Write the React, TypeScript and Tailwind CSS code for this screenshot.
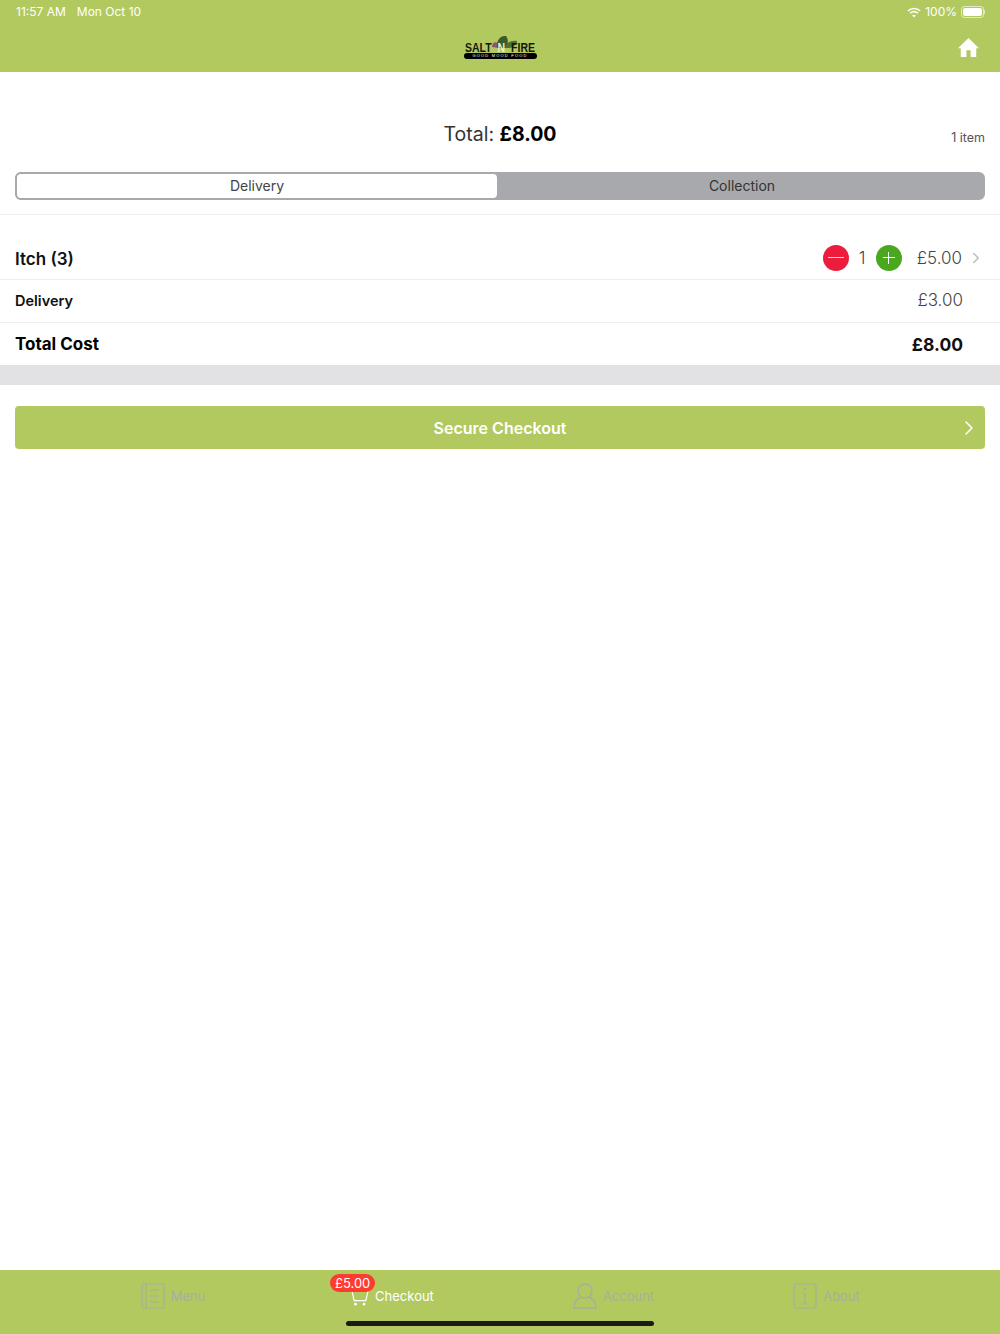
import React from "react";
import { ChevronRight } from "lucide-react";

const mont = "font-['Inter','Liberation_Sans',sans-serif]";

const Logo = () => (
  <div className="relative flex h-[24px] w-[74px] flex-col items-center">
    <svg viewBox="0 0 26 14" className="absolute left-[29px] top-0 h-[14px] w-[26px]">
      <path d="M0 12 C0 8 3 6 6 8 L7 13 Z" fill="#8a5a6a" />
      <path d="M5 13 C4 6 8 0 14 1 C17 5 16 10 13 13 Z" fill="#3c5a2a" />
      <path d="M12 13 C14 8 19 5 25 6 C25 10 21 13 17 13 Z" fill="#4d6e35" />
    </svg>
    <div className="relative mt-[6px] flex h-[12px] w-[70px] scale-y-[1.25] items-center justify-between text-[10.5px] leading-none font-black text-[#141810] font-['Liberation_Sans',sans-serif]">
      <span>SALT</span>
      <span className="text-[#e8efd4]">N</span>
      <span>FIRE</span>
    </div>
    <div className="relative flex h-[6px] w-[73px] items-center justify-center rounded-[3px] bg-black text-[4px] leading-none tracking-[1.2px] text-white font-['Liberation_Sans',sans-serif]">
      GOOD MOOD FOOD
    </div>
  </div>
);

const Header = () => (
  <header className="flex h-[72px] flex-col bg-[#b2c95f] text-white">
    <div className="flex h-[24px] items-center justify-between pl-[16px] pr-[15px] text-[12px] font-['Inter',sans-serif]">
      <div className="flex gap-[11px]">
        <span>11:57 AM</span>
        <span>Mon Oct 10</span>
      </div>
      <div className="flex items-center gap-[4px]">
        <svg viewBox="0 0 16 12" className="h-[11px] w-[14px]" fill="none" stroke="white" strokeWidth="1.8">
          <path d="M1 4.2 C5 0.6 11 0.6 15 4.2" />
          <path d="M3.6 6.8 C6.2 4.6 9.8 4.6 12.4 6.8" />
          <path d="M8 11.6 L5.8 9.2 C7 8.2 9 8.2 10.2 9.2 Z" fill="white" stroke="none" />
        </svg>
        <span>100%</span>
        <div className="flex items-center">
          <div className="h-[12px] w-[23px] rounded-[3px] border border-white/60 p-[1px]">
            <div className="h-full w-full rounded-[2px] bg-white" />
          </div>
          <div className="h-[4px] w-[1px] bg-white/60" />
        </div>
      </div>
    </div>
    <div className="relative flex flex-1 items-start justify-center pt-[11px]">
      <Logo />
      <svg viewBox="0 0 20 18" className="absolute right-[21px] top-[14px] h-[19px] w-[21px]" fill="white">
        <path d="M10 0 L20 9.6 L17.4 9.6 L17.4 18 L12 18 L12 11.6 L8 11.6 L8 18 L2.6 18 L2.6 9.6 L0 9.6 Z" />
      </svg>
    </div>
  </header>
);

const TabBar = () => (
  <footer className="relative mt-auto grid h-[64px] grid-cols-4 bg-[#b2c95f] pl-[65px] pr-[67px] text-[13px] font-['Inter',sans-serif]">
    <div className="flex items-start justify-center gap-[6px] pr-[1px] pt-[13px] text-[#a6afa0]">
      <svg viewBox="0 0 24 26" className="h-[26px] w-[24px]" fill="none" stroke="#a6afa0" strokeWidth="1.2">
        <rect x="1" y="1" width="22" height="24" rx="1.5" />
        <path d="M5 1V25M9 7H18M9 13H18M9 19H18" />
      </svg>
      <span className="mt-[4px]">Menu</span>
    </div>
    <div className="relative flex items-start justify-center gap-[6px] pl-[4px] pt-[17px] text-white">
      <svg viewBox="0 0 20 20" className="h-[20px] w-[18px]" fill="none" stroke="white" strokeWidth="1.3">
        <path d="M1 3H19L16.5 14H3.5Z" />
        <circle cx="5" cy="18" r="0.9" fill="white" />
        <circle cx="14.5" cy="18" r="0.9" fill="white" />
      </svg>
      <span>Checkout</span>
      <span className="absolute left-[48px] top-[4px] rounded-full bg-[#ff3b30] px-[5px] text-[13px] leading-[18px] text-white">£5.00</span>
    </div>
    <div className="flex items-start justify-center gap-[6px] pl-[12px] pt-[13px] text-[#a6afa0]">
      <svg viewBox="0 0 24 26" className="h-[26px] w-[24px]" fill="none" stroke="#a6afa0" strokeWidth="1.4">
        <ellipse cx="12" cy="8" rx="7" ry="7" />
        <path d="M8 14C3.500 16 1 19 1 25H23C23 19 20.500 16 16 14" />
      </svg>
      <span className="mt-[4px]">Account</span>
    </div>
    <div className="flex items-start justify-center gap-[6px] pl-[4px] pt-[13px] text-[#a6afa0]">
      <svg viewBox="0 0 24 26" className="h-[26px] w-[24px]" fill="none" stroke="#a6afa0" strokeWidth="1.2">
        <rect x="1" y="1" width="22" height="24" rx="1.5" />
        <path d="M10 11H12V21M9.500 21H14.500" />
        <circle cx="12" cy="6" r="0.8" fill="#a6afa0" />
      </svg>
      <span className="mt-[4px]">About</span>
    </div>
    <div className="absolute bottom-[8px] left-[346px] h-[5px] w-[308px] rounded-full bg-[#1a1a1a]" />
  </footer>
);

export default function App() {
  return (
    <div className={`flex h-[1334px] w-[1000px] flex-col overflow-hidden bg-white ${mont}`}>
      <Header />

      <div className="relative flex h-[100px] items-center justify-center pt-[26px] text-[19.5px] text-[#333]">
        <span>
          Total: <b className="font-bold text-black">£8.00</b>
        </span>
        <span className="absolute right-[15px] top-[57px] text-[12.5px] text-[#555]">1 item</span>
      </div>

      <div className="mx-[15px] flex h-[28px] overflow-hidden rounded-[6px] bg-[#a7a9ac] text-[14px] leading-[26px] text-[#444]">
        <div className="flex w-[484px] items-start justify-center rounded-[6px] border-2 border-[#a7a9ac] bg-white">
          <span className="-mt-[1px]">Delivery</span>
        </div>
        <div className="flex flex-1 items-start justify-center pt-[1px] text-[#333]">Collection</div>
      </div>

      <div className="mt-[14px] border-t border-[#eeeeee]" />

      <div className="flex h-[65px] items-center justify-between border-b border-[#eeeeee] pb-[1px] pl-[15px] pr-[15px] pt-[22px]">
        <span className="mt-[4px] text-[17px] font-semibold text-[#111]">Itch (3)</span>
        <div className="flex items-center text-[#444]">
          <div className="flex h-[26px] w-[26px] items-center justify-center rounded-full bg-[#ec1c3c]">
            <div className="h-[1.5px] w-[16px] bg-white/80" />
          </div>
          <span className="mt-[2px] w-[27px] text-center text-[17px] font-light">1</span>
          <div className="relative flex h-[26px] w-[26px] items-center justify-center rounded-full bg-[#4aa81e]">
            <div className="h-[1.5px] w-[12px] bg-white" />
            <div className="absolute h-[12px] w-[1.5px] bg-white" />
          </div>
          <span className="ml-[15px] mt-[2px] text-[17px] font-light">£5.00</span>
          <ChevronRight className="ml-[5px] h-[18px] w-[18px] text-[#bdbdbd]" strokeWidth={2} />
        </div>
      </div>

      <div className="flex h-[43px] items-center justify-between border-b border-[#eeeeee] pl-[15px] pr-[37px]">
        <span className="text-[14.5px] font-semibold text-[#111]">Delivery</span>
        <span className="text-[17px] font-light text-[#444]">£3.00</span>
      </div>

      <div className="flex h-[42px] items-center justify-between pl-[15px] pr-[37px] pt-[2px]">
        <span className="text-[17px] font-bold text-black">Total Cost</span>
        <span className="text-[17.5px] font-bold text-[#111]">£8.00</span>
      </div>

      <div className="h-[20px] bg-[#e2e2e4]" />

      <button className="relative mx-[15px] mt-[21px] flex h-[43px] items-center justify-center rounded-[4px] bg-[#b2c95f] text-[16px] font-semibold text-white">
        Secure Checkout
        <ChevronRight className="absolute right-[4px] top-[10px] h-[24px] w-[24px]" strokeWidth={1.5} />
      </button>

      <TabBar />
    </div>
  );
}
